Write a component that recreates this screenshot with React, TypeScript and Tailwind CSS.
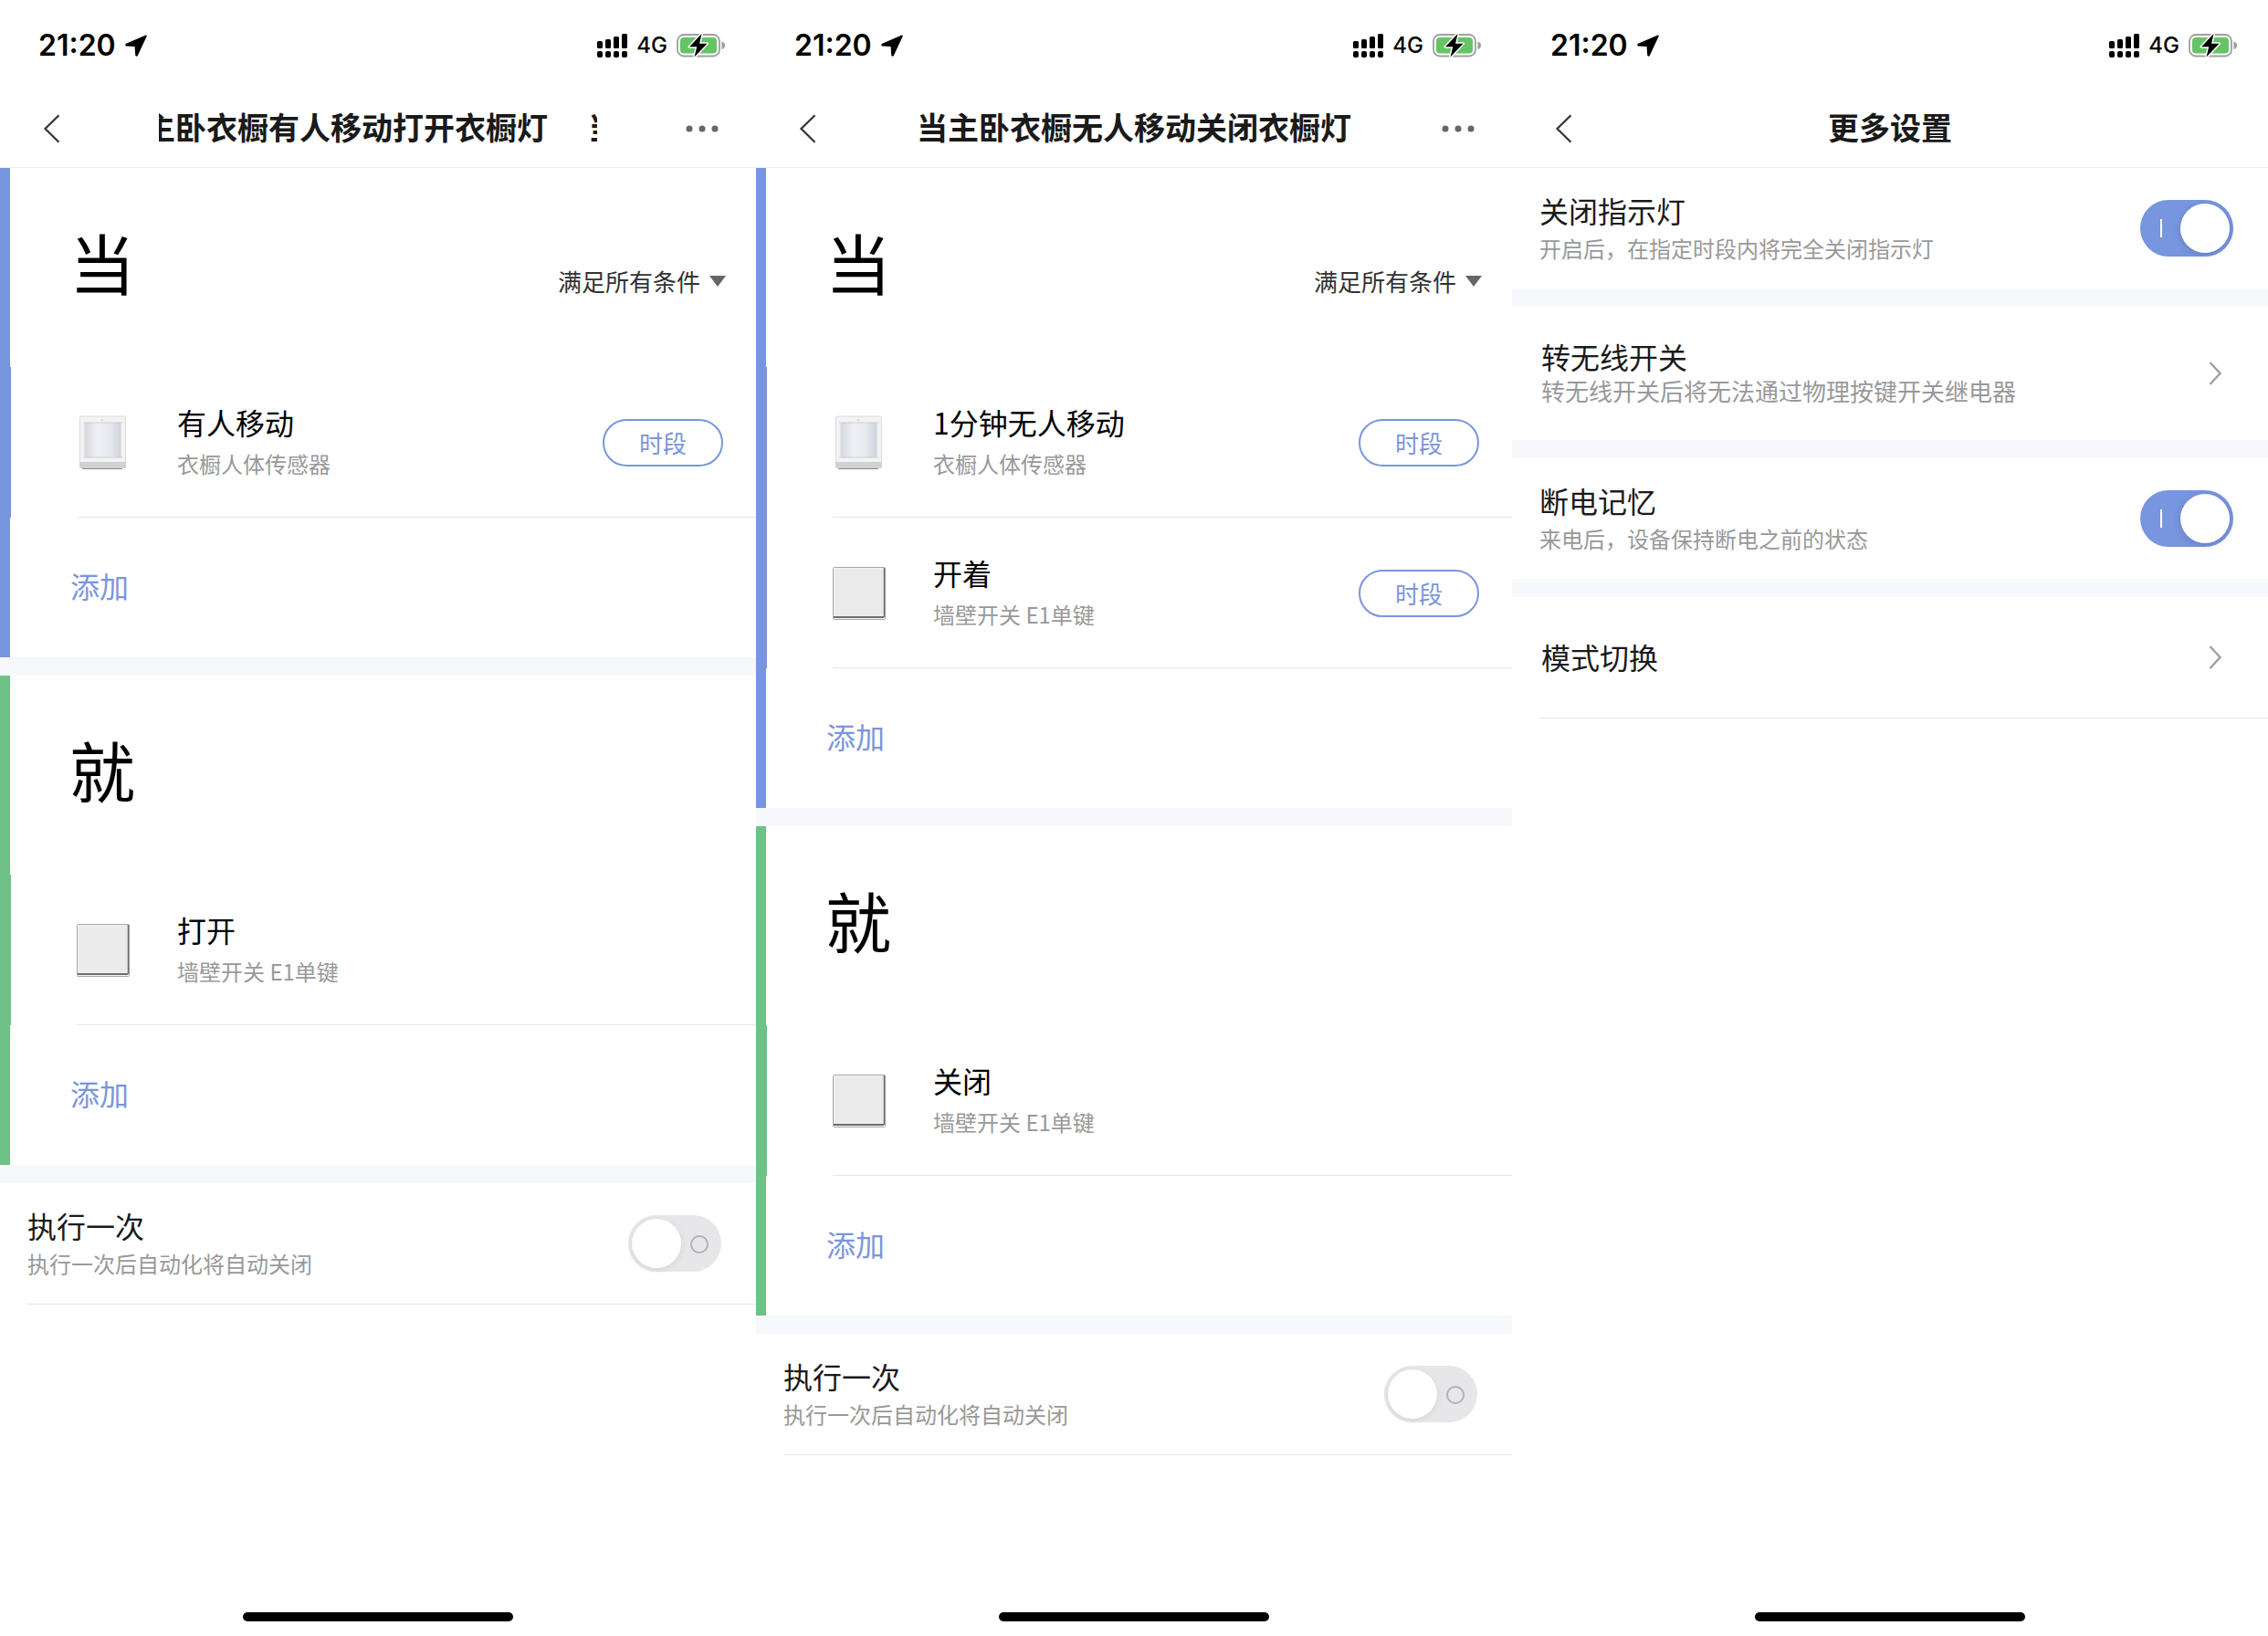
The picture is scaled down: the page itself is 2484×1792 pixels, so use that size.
import { useId, useState } from "react";
import type { ReactNode } from "react";

type Device = "sensor" | "switch";

type RuleItem = {
  device: Device;
  title: string;
  subtitle: string;
  period?: boolean;
};

function LocationArrow() {
  return (
    <svg viewBox="0 0 24 24" className="h-6 w-6" aria-hidden="true">
      <path
        d="M22.600.600 1.200 9.800C-.3 10.600 0 12.300 1.600 12.500l9 .600.600 9.200c.200 1.600 2 1.900 2.700.400L23.700 1.800c.3-.8-.4-1.500-1.100-1.200Z"
        fill="#000"
      />
    </svg>
  );
}

function SignalBars() {
  return (
    <svg viewBox="0 0 33 26" className="h-[26px] w-[33px]" aria-hidden="true">
      <rect x="0" y="8" width="6" height="8" rx="1.500" />
      <rect x="9" y="6" width="6" height="10" rx="1.500" />
      <rect x="18" y="3" width="6" height="13" rx="1.500" />
      <rect x="27" y="0" width="6" height="16" rx="1.500" />
      <rect x="0" y="19" width="6" height="7" rx="2" />
      <rect x="9" y="19" width="6" height="7" rx="2" />
      <rect x="18" y="19" width="6" height="7" rx="2" />
      <rect x="27" y="19" width="6" height="7" rx="2" />
    </svg>
  );
}

function Battery() {
  return (
    <svg viewBox="0 0 54 28" className="h-7 w-[54px]" aria-hidden="true">
      <rect x="1" y="2" width="46" height="23.500" rx="7" fill="#fff" stroke="#a0a0a0" strokeWidth="1.800" />
      <rect x="4" y="5" width="40" height="17.500" rx="4" fill="#65c466" />
      <path d="M49.500 9.500c2.200.600 3.500 2.200 3.500 4.200s-1.300 3.700-3.500 4.300Z" fill="#9a9a9a" />
      <path
        d="M27.500 1 14 15.200h8.200L19.500 26.500 33.500 11.800h-8.400Z"
        fill="#000"
        stroke="#fff"
        strokeWidth="3"
        strokeLinejoin="round"
        paintOrder="stroke"
      />
    </svg>
  );
}

function StatusBar() {
  return (
    <div className="flex h-[100px] items-center justify-between pl-[42px] pr-[33px] font-['Inter',sans-serif] text-black">
      <div className="flex items-center gap-2.5">
        <span className="text-[32px] font-semibold leading-10">21:20</span>
        <LocationArrow />
      </div>
      <div className="flex items-center gap-2.5">
        <SignalBars />
        <span className="text-2xl font-medium leading-8">4G</span>
        <Battery />
      </div>
    </div>
  );
}

function NavBar({ title, scrolling, more }: { title: string; scrolling?: boolean; more?: boolean }) {
  return (
    <header className="grid h-[84px] grid-cols-[1fr_480px_1fr] items-center border-b border-[#ececec] pb-0.5">
      <button type="button" aria-label="返回" className="justify-self-start pl-[47px]">
        <svg viewBox="0 0 20 32" className="h-8 w-5" fill="none" stroke="#333" strokeWidth="2.200" aria-hidden="true">
          <path d="M17.500 1.200 2.500 16l15 14.800" />
        </svg>
      </button>
      <h1 className="overflow-hidden whitespace-nowrap pb-1 text-center text-[34px] font-bold leading-[48px] text-[#1a1a1a]">
        {scrolling ? (
          // marquee: the next pass is just coming in at the right edge
          <span className="-ml-[50px] flex gap-11">
            <span>{title}</span>
            <span aria-hidden="true">{title[0]}</span>
          </span>
        ) : (
          title
        )}
      </h1>
      {more && (
        <button type="button" aria-label="更多" className="justify-self-end pr-[41px]">
          <svg viewBox="0 0 36 8" className="h-2 w-9" fill="#666" aria-hidden="true">
            <circle cx="4" cy="4" r="3.500" />
            <circle cx="18" cy="4" r="3.500" />
            <circle cx="32" cy="4" r="3.500" />
          </svg>
        </button>
      )}
    </header>
  );
}

function SensorIcon() {
  const id = useId();
  return (
    <svg viewBox="0 0 58 60" className="h-[60px] w-[58px]" aria-hidden="true">
      <defs>
        <linearGradient id={id} x1="0" x2="1">
          <stop offset="0" stopColor="#d6d9df" />
          <stop offset=".35" stopColor="#eff1f5" />
          <stop offset=".7" stopColor="#e6e9ef" />
          <stop offset="1" stopColor="#d0d4dc" />
        </linearGradient>
      </defs>
      <rect x="6" y="56" width="44" height="3" rx="1" fill="#858688" />
      <rect x="3.500" y="1" width="50" height="56" rx="2" fill="#f3f3f3" stroke="#dcdcdc" />
      <path d="M3 51h51v5a2 2 0 0 1-2 2H5a2 2 0 0 1-2-2Z" fill="#d0d1d3" />
      <rect x="9" y="8" width="39" height="38" fill={`url(#${id})`} />
      <path d="M7 8h43M7 46h43" stroke="#cbccd0" />
      <path d="M8.500 8v38M48.500 8v38" stroke="#e2e3e6" />
      <circle cx="28" cy="5" r="1.500" fill="#e0e0e0" />
    </svg>
  );
}

function SwitchIcon() {
  return (
    <svg viewBox="0 0 58 60" className="h-[60px] w-[58px]" aria-hidden="true">
      <rect x=".5" y="1.500" width="57" height="57" rx="1" fill="#f5f5f5" stroke="#a8a8a8" />
      <rect x="1.500" y="2.500" width="54" height="53" fill="#ebebeb" />
      <path d="M1 56h55" stroke="#6e6e6e" strokeWidth="2" />
      <path d="M56.500 2v54" stroke="#707070" strokeWidth="1.600" />
    </svg>
  );
}

function Item({ item, edge }: { item: RuleItem; edge: string }) {
  return (
    <li className={`border-l ${edge}`}>
      <div className="ml-[72px] flex h-[165px] items-center border-b border-[#e5e5e5] pr-9 pt-0.5">
        {item.device === "sensor" ? <SensorIcon /> : <SwitchIcon />}
        <div className="ml-[52px] flex-1 pb-1.5">
          <div className="text-[32px] leading-[52px] text-black">{item.title}</div>
          <div className="text-2xl leading-10 text-[#999]">{item.subtitle}</div>
        </div>
        {item.period && (
          <button
            type="button"
            className="h-[52px] w-[132px] rounded-full border-2 border-[#7a95dd] text-[26px] leading-9 text-[#7a95dd]"
          >
            时段
          </button>
        )}
      </div>
    </li>
  );
}

function Section({
  heading,
  items,
  edge,
  children,
}: {
  heading: string;
  items: RuleItem[];
  edge: string;
  children?: ReactNode;
}) {
  return (
    <section className={`border-l-[11px] ${edge}`}>
      <div className="flex items-end justify-between pb-[76px] pl-[65px] pr-[33px] pt-[66px]">
        <h2 className="pb-1 text-7xl leading-[72px] text-black">{heading}</h2>
        {children}
      </div>
      <ul>
        {items.map((item) => (
          <Item key={item.title} item={item} edge={edge} />
        ))}
      </ul>
      <div className="flex h-[153px] items-center pb-1.5 pl-[66px]">
        <button type="button" className="text-[32px] leading-[48px] text-[#7a95dd]">
          添加
        </button>
      </div>
    </section>
  );
}

function ConditionSelect() {
  return (
    <div className="relative">
      <select
        aria-label="触发条件"
        className="block h-9 appearance-none bg-transparent pr-[27px] text-[26px] leading-9 text-[#333]"
      >
        <option>满足所有条件</option>
        <option>满足任一条件</option>
      </select>
      <svg
        viewBox="0 0 18 12"
        className="pointer-events-none absolute right-0 top-3 h-3 w-[18px]"
        fill="#666"
        aria-hidden="true"
      >
        <path d="M0 0h18L9 12Z" />
      </svg>
    </div>
  );
}

function Gap() {
  return <div className="h-5 bg-[#f7f8fb]" />;
}

function ToggleRow({ title, subtitle, initial }: { title: string; subtitle: string; initial: boolean }) {
  const id = useId();
  const [on, setOn] = useState(initial);
  return (
    <div className="flex h-[132px] items-center justify-between pl-[30px] pr-[38px]">
      <label htmlFor={id}>
        <span className="block text-[32px] leading-[44px] text-[#1a1a1a]">{title}</span>
        <span className="block text-2xl leading-10 text-[#999]">{subtitle}</span>
      </label>
      <div className="relative h-[62px] w-[102px]">
        <input
          id={id}
          type="checkbox"
          role="switch"
          checked={on}
          onChange={() => setOn(!on)}
          className="block size-full appearance-none rounded-full bg-[#e7e7e9] checked:bg-[#7895e0]"
        />
        {on ? (
          <>
            <span className="pointer-events-none absolute left-[22px] top-[21px] h-5 w-0.5 bg-white" />
            <span className="pointer-events-none absolute right-1 top-1 size-[54px] rounded-full bg-white shadow-[0_2px_8px_rgba(0,0,0,0.15)]" />
          </>
        ) : (
          <>
            <span className="pointer-events-none absolute right-3.5 top-[22px] size-5 rounded-full border-2 border-[#b2b2b2]" />
            <span className="pointer-events-none absolute left-1 top-1 size-[54px] rounded-full bg-white shadow-[0_2px_8px_rgba(0,0,0,0.08)]" />
          </>
        )}
      </div>
    </div>
  );
}

function LinkRow({ title, subtitle, height }: { title: string; subtitle?: string; height: string }) {
  return (
    <button type="button" className={`flex w-full items-center justify-between pl-8 pr-[51px] text-left ${height}`}>
      <span className="pb-0.5">
        <span className="block text-[32px] leading-[40px] text-[#1a1a1a]">{title}</span>
        {subtitle && <span className="block text-[26px] leading-9 text-[#999]">{subtitle}</span>}
      </span>
      <svg viewBox="0 0 14 26" className="h-[26px] w-3.5" fill="none" stroke="#a0a0a0" strokeWidth="2.400" aria-hidden="true">
        <path d="M1.500 1 12.500 13 1.500 25" />
      </svg>
    </button>
  );
}

function Line() {
  return <div className="ml-[30px] h-px bg-[#e5e5e5]" />;
}

function Phone({
  title,
  scrolling,
  more,
  children,
}: {
  title: string;
  scrolling?: boolean;
  more?: boolean;
  children: ReactNode;
}) {
  return (
    <main className="flex min-h-screen min-w-0 flex-col bg-white">
      <StatusBar />
      <NavBar title={title} scrolling={scrolling} more={more} />
      {children}
      <div className="mb-4 mt-auto h-2.5 w-[296px] self-center rounded-full bg-black" />
    </main>
  );
}

const BLUE = "border-[#7895e0]";
const GREEN = "border-[#6fc287]";

export default function App() {
  return (
    <div lang="zh-CN" className="grid grid-cols-3 bg-white font-['Noto_Sans_CJK_SC',sans-serif]">
      <Phone title="当主卧衣橱有人移动打开衣橱灯" scrolling more>
        <Section
          heading="当"
          edge={BLUE}
          items={[{ device: "sensor", title: "有人移动", subtitle: "衣橱人体传感器", period: true }]}
        >
          <ConditionSelect />
        </Section>
        <Gap />
        <Section
          heading="就"
          edge={GREEN}
          items={[{ device: "switch", title: "打开", subtitle: "墙壁开关 E1单键" }]}
        />
        <Gap />
        <ToggleRow title="执行一次" subtitle="执行一次后自动化将自动关闭" initial={false} />
        <Line />
      </Phone>

      <Phone title="当主卧衣橱无人移动关闭衣橱灯" more>
        <Section
          heading="当"
          edge={BLUE}
          items={[
            { device: "sensor", title: "1分钟无人移动", subtitle: "衣橱人体传感器", period: true },
            { device: "switch", title: "开着", subtitle: "墙壁开关 E1单键", period: true },
          ]}
        >
          <ConditionSelect />
        </Section>
        <Gap />
        <Section
          heading="就"
          edge={GREEN}
          items={[{ device: "switch", title: "关闭", subtitle: "墙壁开关 E1单键" }]}
        />
        <Gap />
        <ToggleRow title="执行一次" subtitle="执行一次后自动化将自动关闭" initial={false} />
        <Line />
      </Phone>

      <Phone title="更多设置">
        <ToggleRow title="关闭指示灯" subtitle="开启后，在指定时段内将完全关闭指示灯" initial />
        <Gap />
        <LinkRow title="转无线开关" subtitle="转无线开关后将无法通过物理按键开关继电器" height="h-[146px]" />
        <Gap />
        <ToggleRow title="断电记忆" subtitle="来电后，设备保持断电之前的状态" initial />
        <Gap />
        <LinkRow title="模式切换" height="h-[132px]" />
        <Line />
      </Phone>
    </div>
  );
}
